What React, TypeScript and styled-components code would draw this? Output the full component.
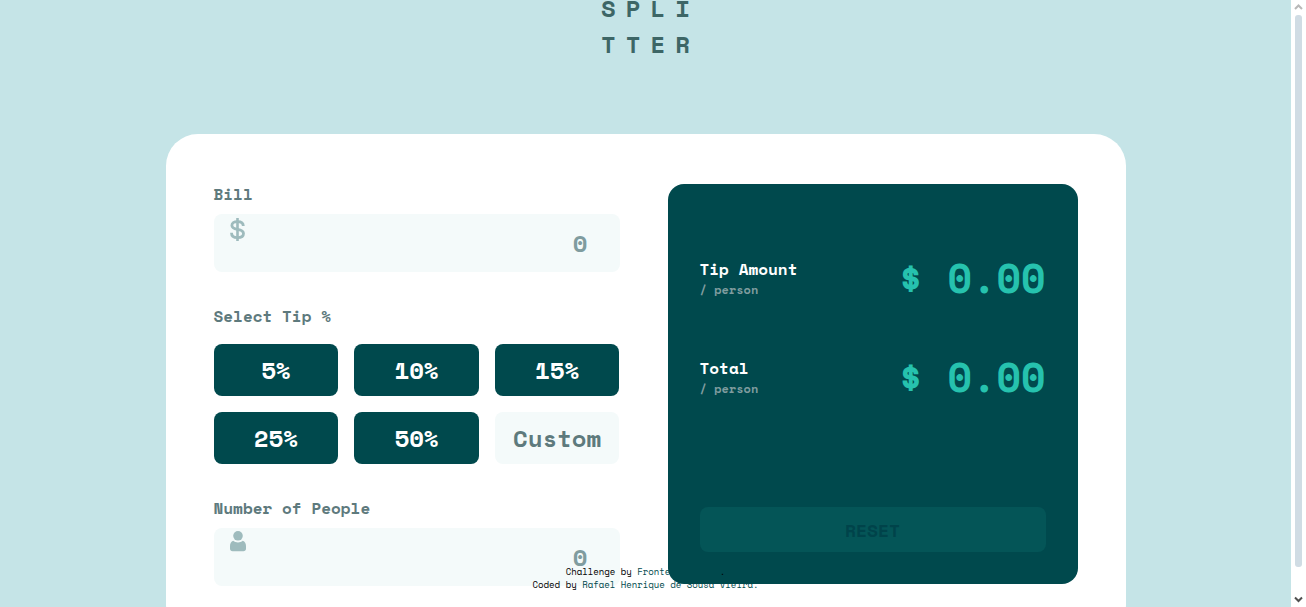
import React from "react";
import styled, { createGlobalStyle } from "styled-components";

const color = {
  page: "#c5e4e7",
  dark: "#00494d",
  label: "#5e7a7d",
  muted: "#7f9c9f",
  icon: "#9ebbbd",
  field: "#f4fafa",
  accent: "#26c2ae",
  logo: "#3d6666",
};

const GlobalStyle = createGlobalStyle`
  *, *::before, *::after { box-sizing: border-box; }
  body {
    margin: 0;
    background: ${color.page};
    font-family: "Space Mono", "Liberation Mono", monospace;
    font-weight: 700;
  }
  button, input { font: inherit; border: 0; margin: 0; }
`;

const Window = styled.div`
  position: relative;
  display: grid;
  grid-template-columns: minmax(0, 1fr) 15px;
  height: 100vh;
  overflow: hidden;
`;

const Content = styled.div`
  display: flex;
  flex-direction: column;
  align-items: center;
  min-height: 0;
`;

const Logo = styled.h1`
  margin: -10px 0 72px;
  padding-left: 10px;
  color: ${color.logo};
  font-size: 24px;
  line-height: 36px;
  letter-spacing: 10px;
`;

const Card = styled.main`
  display: grid;
  grid-template-columns: minmax(0, 1fr) 410px;
  align-items: start;
  column-gap: 48px;
  width: 100%;
  max-width: 960px;
  padding: 50px 48px;
  border-radius: 32px;
  background: #fff;
`;

const Form = styled.form`
  display: flex;
  flex-direction: column;
  gap: 34px;
`;

const Field = styled.div`
  display: flex;
  flex-direction: column;
  gap: 10px;
`;

const TipGroup = styled.fieldset`
  min-width: 0;
  margin: 0;
  padding: 0;
  border: 0;
`;

const Label = styled.label`
  color: ${color.label};
  font-size: 16px;
  line-height: 20px;
`;

const Legend = styled.legend`
  margin-bottom: 18px;
  padding: 0;
  color: ${color.label};
  font-size: 16px;
  line-height: 20px;
`;

const FieldBox = styled.div`
  position: relative;
  display: flex;
`;

const FieldIcon = styled.span`
  position: absolute;
  top: 3px;
  left: 16px;
  display: flex;
  color: ${color.icon};
`;

const NumberInput = styled.input`
  width: 100%;
  height: 58px;
  padding: 0 32px;
  border-radius: 8px;
  background: ${color.field};
  color: ${color.dark};
  font-size: 24px;
  text-align: right;
  &::placeholder { color: ${color.muted}; opacity: 1; }
`;

const TipGrid = styled.div`
  display: grid;
  grid-template-columns: repeat(3, minmax(0, 1fr));
  gap: 16px;
`;

const TipButton = styled.button`
  height: 52px;
  border-radius: 8px;
  background: ${color.dark};
  color: #fff;
  font-size: 24px;
  cursor: pointer;
`;

const CustomTip = styled.input`
  width: 100%;
  height: 52px;
  padding: 0 8px;
  border-radius: 8px;
  background: ${color.field};
  color: ${color.dark};
  font-size: 24px;
  text-align: center;
  &::placeholder { color: ${color.label}; opacity: 1; }
`;

const Panel = styled.section`
  display: flex;
  flex-direction: column;
  gap: 57px;
  min-height: 400px;
  padding: 75px 32px 32px;
  border-radius: 16px;
  background: ${color.dark};
`;

const ResultRow = styled.div`
  display: flex;
  justify-content: space-between;
`;

const ResultName = styled.h2`
  margin: 0;
  color: #fff;
  font-size: 16px;
  line-height: 20px;
`;

const PerPerson = styled.p`
  margin: 0;
  color: ${color.muted};
  font-size: 12px;
  line-height: 22px;
`;

const Amount = styled.output`
  color: ${color.accent};
  font-size: 40px;
  line-height: 38px;
`;

const ResetButton = styled.button`
  height: 45px;
  margin-top: auto;
  border-radius: 8px;
  background: #045557;
  color: #00434a;
  font-size: 18px;
`;

const Attribution = styled.footer`
  position: absolute;
  right: 15px;
  bottom: 16px;
  left: 0;
  color: #000;
  font-size: 9px;
  font-weight: 400;
  line-height: 13px;
  text-align: center;
`;

const Credit = styled.a`
  color: ${color.dark};
  text-decoration: none;
`;

const Scrollbar = styled.div`
  display: flex;
  flex-direction: column;
  align-items: center;
  background: #fff;
`;

const ScrollThumb = styled.div`
  flex: 1;
  width: 7px;
  margin-bottom: 25px;
  border-radius: 3px;
  background: #d0dce4;
`;

const DollarIcon = () => (
  <svg width="16" height="25" viewBox="0 0 16 25" fill="none" stroke="currentColor" aria-hidden="true">
    <path d="M7.500 1V24" strokeWidth="2.600" />
    <path
      d="M13.300 9C13.300 6.300 11.200 4.700 7.500 4.700S1.900 6.200 1.900 8.500C1.900 11 4 11.700 7.500 12.300S13.500 13.700 13.500 16.500S11.200 20.700 7.500 20.700S1.500 19 1.500 15.800"
      strokeWidth="2.800"
    />
  </svg>
);

const PersonIcon = () => (
  <svg width="16" height="21" viewBox="0 0 16 21" fill="currentColor" aria-hidden="true">
    <circle cx="8" cy="4.800" r="4.800" />
    <path d="M3.200 9.700C4.500 10.800 6.100 11.400 8 11.400s3.500-.6 4.800-1.700C14.900 10.300 16 12.500 16 15v2.500c0 1.800-1 2.700-2.600 2.700H2.600C1 20.200 0 19.300 0 17.500V15c0-2.500 1.100-4.700 3.200-5.300Z" />
  </svg>
);

const Arrow = ({ down = false }: { down?: boolean }) => (
  <svg width="9" height="15" viewBox="0 0 9 15" fill="none" strokeWidth="2" aria-hidden="true">
    {down ? (
      <path d="M1 5.500L4.500 9L8 5.500" stroke="#505050" />
    ) : (
      <path d="M1 9L4.500 5.500L8 9" stroke="#b8b8b8" />
    )}
  </svg>
);

const Result = ({ name }: { name: string }) => (
  <ResultRow>
    <div>
      <ResultName>{name}</ResultName>
      <PerPerson>/ person</PerPerson>
    </div>
    <Amount aria-label={name}>$ 0.00</Amount>
  </ResultRow>
);

export default function App() {
  return (
    <>
      <GlobalStyle />
      <Window>
        <Content>
          <Logo>
            SPLI
            <br />
            TTER
          </Logo>
          <Card>
            <Form>
              <Field>
                <Label htmlFor="bill">Bill</Label>
                <FieldBox>
                  <NumberInput id="bill" inputMode="decimal" placeholder="0" />
                  <FieldIcon>
                    <DollarIcon />
                  </FieldIcon>
                </FieldBox>
              </Field>
              <TipGroup>
                <Legend>Select Tip %</Legend>
                <TipGrid>
                  {[5, 10, 15, 25, 50].map((tip) => (
                    <TipButton key={tip} type="button">{`${tip}%`}</TipButton>
                  ))}
                  <CustomTip aria-label="Custom tip" inputMode="decimal" placeholder="Custom" />
                </TipGrid>
              </TipGroup>
              <Field>
                <Label htmlFor="people">Number of People</Label>
                <FieldBox>
                  <NumberInput id="people" inputMode="numeric" placeholder="0" />
                  <FieldIcon>
                    <PersonIcon />
                  </FieldIcon>
                </FieldBox>
              </Field>
            </Form>
            <Panel>
              <Result name="Tip Amount" />
              <Result name="Total" />
              <ResetButton type="button">RESET</ResetButton>
            </Panel>
          </Card>
        </Content>
        <Scrollbar>
          <Arrow />
          <ScrollThumb />
          <Arrow down />
        </Scrollbar>
        <Attribution>
          Challenge by <Credit href="#frontend-mentor">Frontend Mentor</Credit>.
          <br />
          Coded by <Credit href="#author">Rafael Henrique de Sousa Vieira.</Credit>
        </Attribution>
      </Window>
    </>
  );
}
